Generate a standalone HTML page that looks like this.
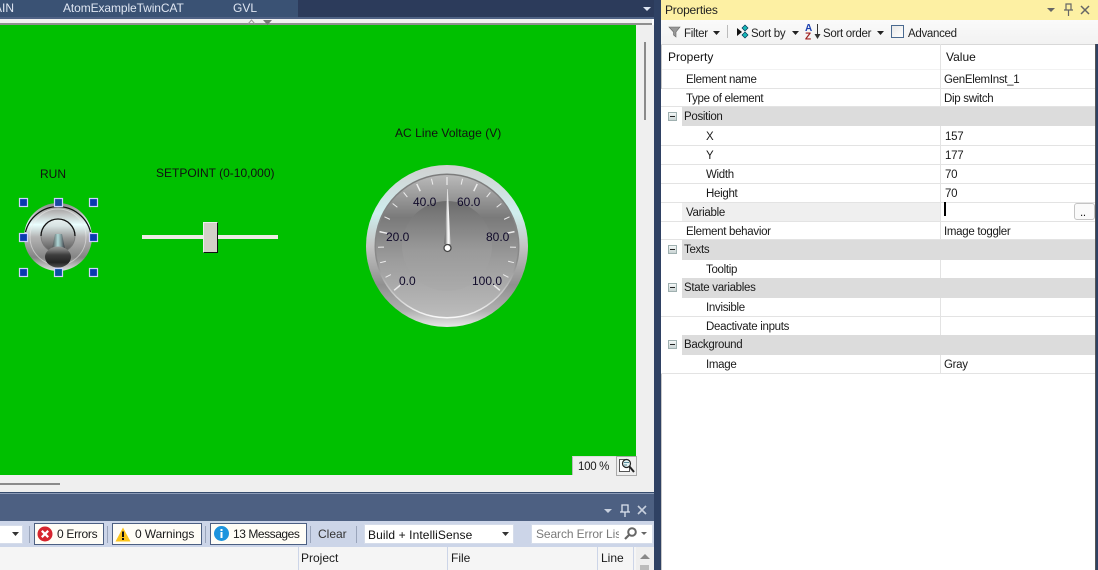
<!DOCTYPE html>
<html><head><meta charset="utf-8"><style>
html,body{margin:0;padding:0;width:1098px;height:570px;overflow:hidden;background:#fff;font-family:"Liberation Sans",sans-serif;font-size:12px;color:#1a1a1a}
.a{position:absolute}
.t{position:absolute;white-space:nowrap;line-height:14px;font-size:11.5px;letter-spacing:-.3px;margin-top:1px}
.n{font-size:12px;letter-spacing:0;margin-top:0}
.r{position:absolute;left:661px;width:434px;background:#fff;border-bottom:1px solid #e3e3e3;box-sizing:border-box}
.g{position:absolute;left:661px;width:434px;background:#dcdcdc}
.g i{position:absolute;left:0;top:0;bottom:0;width:21px;background:#fff}
.b{position:absolute;left:668px;width:9px;height:9px;box-sizing:border-box;border:1px solid #9fb0b0;background:linear-gradient(#f4f8f8,#c9d3d3)}
.b:after{content:"";position:absolute;left:1px;top:3px;width:5px;height:1px;background:#222}
.btn{position:absolute;top:523px;height:22px;box-sizing:border-box;border:1px solid #4d6082;background:#fffdf6}
.sep{position:absolute;top:526px;width:1px;height:17px;background:#9aa5bb}
</style></head><body>
<!-- top tabs -->
<div class="a" style="left:0;top:0;width:298px;height:17px;background:#3a5274"></div>
<div class="a" style="left:298px;top:0;width:356px;height:17px;background:#2c3b5b"></div>
<div class="a" style="left:0;top:17px;width:654px;height:2px;background:#4f6285"></div>
<div class="a" style="left:0;top:19px;width:652px;height:4px;background:#f0f0f0"></div>
<div class="a" style="left:0;top:23px;width:652px;height:2px;background:#8f8f8f"></div>
<div class="t n" style="left:-6px;top:1px;color:#dfe6f2">AIN</div>
<div class="t n" style="left:63px;top:1px;color:#dfe6f2;letter-spacing:-.1px">AtomExampleTwinCAT</div>
<div class="t n" style="left:233px;top:1px;color:#dfe6f2">GVL</div>
<svg class="a" style="left:640px;top:5px" width="14" height="8"><path d="M3 2h8l-4 4z" fill="#dfe6f2"/></svg>
<svg class="a" style="left:245px;top:18px" width="30" height="8"><path d="M3 6l3.500-4 3.500 4" fill="none" stroke="#999"/><path d="M18 2h9l-4.500 5z" fill="#777"/></svg>
<!-- green canvas -->
<div class="a" style="left:0;top:25px;width:636px;height:450px;background:#00c000"></div>
<div class="a" style="left:636px;top:25px;width:18px;height:467px;background:#efefef"></div>
<div class="a" style="left:644px;top:42px;width:2px;height:78px;background:#8a8a8a"></div>
<div class="a" style="left:0;top:475px;width:654px;height:17px;background:#efefef"></div>
<div class="a" style="left:0;top:483px;width:60px;height:2px;background:#8a8a8a"></div>
<div class="a" style="left:572px;top:456px;width:44px;height:19px;background:#efefef;border-left:1px solid #bbb;border-top:1px solid #ddd;box-sizing:border-box"></div>
<div class="a" style="left:616px;top:456px;width:21px;height:20px;background:#efefef;border:1px solid #aaa;box-sizing:border-box"></div>
<div class="t" style="left:578px;top:459px;letter-spacing:-.3px">100 %</div>
<svg class="a" style="left:617px;top:457px" width="19" height="18"><path d="M2.500 2.500h7l3 3v9h-10z" fill="#fff" stroke="#555"/><circle cx="9.500" cy="6.500" r="4" fill="#e6f4f4" stroke="#222" stroke-width="1.200"/><path d="M12.500 9.500l4.500 5.500" stroke="#222" stroke-width="2"/><path d="M7 5.500h5M7 8h3" stroke="#2a6a80" stroke-width=".8"/></svg>
<div class="a" style="left:654px;top:0;width:7px;height:570px;background:#2f4163"></div>
<!-- widgets -->
<div class="t n" style="left:40px;top:167px;color:#111">RUN</div>
<div class="t n" style="left:156px;top:166px;color:#111">SETPOINT (0-10,000)</div>
<div class="t n" style="left:395px;top:126px;color:#111;letter-spacing:.05px">AC Line Voltage (V)</div>
<div class="a" style="left:142px;top:235px;width:136px;height:4px;background:#eeebe6"></div>
<div class="a" style="left:203px;top:222px;width:15px;height:31px;box-sizing:border-box;background:#d4d0c8;border-right:1px solid #111;border-bottom:1px solid #111;border-top:1px solid #eee;border-left:1px solid #eee"></div>
<svg class="a" style="left:0;top:190px" width="110" height="95">
<defs>
<linearGradient id="k" x1="0" y1="0" x2="0" y2="1"><stop offset="0" stop-color="#8a8a8a"/><stop offset=".14" stop-color="#b8b8b8"/><stop offset=".32" stop-color="#eaffff"/><stop offset=".5" stop-color="#b4b4b4"/><stop offset=".8" stop-color="#848484"/><stop offset="1" stop-color="#e2e2e2"/></linearGradient>
<linearGradient id="d" x1="0" y1="0" x2="0" y2="1"><stop offset="0" stop-color="#e8f0f0"/><stop offset=".2" stop-color="#d8e4e4"/><stop offset=".55" stop-color="#989898"/><stop offset="1" stop-color="#505050"/></linearGradient>
<linearGradient id="lv" x1="0" y1="0" x2="1" y2="0"><stop offset="0" stop-color="#484848"/><stop offset=".45" stop-color="#b0d8d8"/><stop offset=".7" stop-color="#80989a"/><stop offset="1" stop-color="#34343c"/></linearGradient>
<linearGradient id="kn" x1="0" y1="0" x2="0" y2="1"><stop offset="0" stop-color="#9a9a9a"/><stop offset=".18" stop-color="#777"/><stop offset=".4" stop-color="#3e3e3e"/><stop offset=".75" stop-color="#242424"/><stop offset="1" stop-color="#505050"/></linearGradient>
</defs>
<circle cx="58" cy="47" r="34" fill="url(#k)"/>
<path d="M25.500 42A33.500 33.500 0 0 1 90.500 42" fill="none" stroke="#111" stroke-width="1.300"/>
<circle cx="58" cy="47" r="28" fill="none" stroke="#ececec" stroke-opacity=".55"/>
<circle cx="58" cy="46" r="17" fill="url(#d)" stroke="#777" stroke-width=".8"/>
<path d="M41 46A17 17 0 0 1 75 46" fill="none" stroke="#111" stroke-width="1.300"/>
<path d="M55 44h7l3 15H52z" fill="url(#lv)"/>
<ellipse cx="58" cy="67" rx="13" ry="10.500" fill="url(#kn)"/>
<g stroke="#d0d0ff" stroke-width="1.200">
<rect x="19.500" y="8.500" width="8" height="8" fill="#0a3ab0"/><rect x="54.500" y="8.500" width="8" height="8" fill="#1a4aa0"/><rect x="89.500" y="8.500" width="8" height="8" fill="#0a3ab0"/>
<rect x="19.500" y="43.500" width="8" height="8" fill="#0a3ab0"/><rect x="89.500" y="43.500" width="8" height="8" fill="#0a3ab0"/>
<rect x="19.500" y="78.500" width="8" height="8" fill="#0a3ab0"/><rect x="54.500" y="78.500" width="8" height="8" fill="#0a50a0"/><rect x="89.500" y="78.500" width="8" height="8" fill="#0a3ab0"/>
</g>
</svg>
<!-- gauge -->
<svg class="a" style="left:360px;top:160px" width="175" height="175">
<defs>
<linearGradient id="o" x1="0" y1="0" x2="0" y2="1"><stop offset="0" stop-color="#d0d0d0"/><stop offset=".3" stop-color="#cfeeee"/><stop offset=".5" stop-color="#c4c4c4"/><stop offset=".74" stop-color="#909090"/><stop offset=".9" stop-color="#b0b0b0"/><stop offset="1" stop-color="#e8e8e8"/></linearGradient>
<linearGradient id="o2" x1="0" y1="0" x2="0" y2="1"><stop offset="0" stop-color="#7c7c7c"/><stop offset=".6" stop-color="#8a8a8a"/><stop offset="1" stop-color="#fafafa"/></linearGradient>
<linearGradient id="f" x1="0" y1="0" x2="0" y2="1"><stop offset="0" stop-color="#bababa"/><stop offset=".3" stop-color="#7a7a7a"/><stop offset=".6" stop-color="#9c9c9c"/><stop offset="1" stop-color="#bcbcbc"/></linearGradient>
<linearGradient id="f2" x1="0" y1="0" x2="0" y2="1"><stop offset="0" stop-color="#6c6c6c"/><stop offset=".55" stop-color="#9a9a9a"/><stop offset="1" stop-color="#ababab"/></linearGradient>
<linearGradient id="nd" x1="0" y1="0" x2="1" y2="0"><stop offset="0" stop-color="#555"/><stop offset=".6" stop-color="#fff"/><stop offset="1" stop-color="#ccc"/></linearGradient>
</defs>
<circle cx="87" cy="86" r="81" fill="url(#o)"/>
<circle cx="87" cy="86" r="72.500" fill="url(#o2)"/>
<circle cx="87" cy="86" r="71" fill="url(#f)"/>
<circle cx="87" cy="86" r="45" fill="url(#f2)"/>
<g stroke="#ececec" stroke-width="1" transform="translate(87 86)">
<path d="M0-69V-61" stroke-width="1.500" transform="rotate(-130)"/>
<path d="M0-69V-63" transform="rotate(-117)"/>
<path d="M0-69V-63" transform="rotate(-104)"/>
<path d="M0-69V-63" transform="rotate(-91)"/>
<path d="M0-69V-61" stroke-width="1.500" transform="rotate(-78)"/>
<path d="M0-69V-63" transform="rotate(-65)"/>
<path d="M0-69V-63" transform="rotate(-52)"/>
<path d="M0-69V-63" transform="rotate(-39)"/>
<path d="M0-69V-61" stroke-width="1.500" transform="rotate(-26)"/>
<path d="M0-69V-63" transform="rotate(-13)"/>
<path d="M0-69V-61" stroke-width="1.200"/>
<path d="M0-69V-63" transform="rotate(13)"/>
<path d="M0-69V-61" stroke-width="1.500" transform="rotate(26)"/>
<path d="M0-69V-63" transform="rotate(39)"/>
<path d="M0-69V-63" transform="rotate(52)"/>
<path d="M0-69V-63" transform="rotate(65)"/>
<path d="M0-69V-61" stroke-width="1.500" transform="rotate(78)"/>
<path d="M0-69V-63" transform="rotate(91)"/>
<path d="M0-69V-63" transform="rotate(104)"/>
<path d="M0-69V-63" transform="rotate(117)"/>
<path d="M0-69V-61" stroke-width="1.500" transform="rotate(130)"/>
</g>
<g font-family="Liberation Sans,sans-serif" font-size="12" fill="#100a2a">
<text x="26" y="81">20.0</text><text x="53" y="46">40.0</text><text x="97" y="46">60.0</text><text x="126" y="81">80.0</text><text x="39" y="125">0.0</text><text x="112" y="125">100.0</text>
</g>
<path d="M87.200 29h.6l2.700 55h-6z" fill="url(#nd)"/>
<circle cx="87.500" cy="88" r="3.500" fill="#fff" stroke="#444" stroke-width="1.300"/>
</svg>
<!-- error list -->
<div class="a" style="left:0;top:492px;width:654px;height:2px;background:#364c6d"></div>
<div class="a" style="left:0;top:493px;width:654px;height:1px;background:#8d9cb8"></div>
<div class="a" style="left:0;top:494px;width:654px;height:27px;background:#4d6082"></div>
<div class="a" style="left:0;top:521px;width:654px;height:26px;background:#ccd5e8"></div>
<div class="a" style="left:0;top:547px;width:654px;height:23px;background:#f5f5f5"></div>
<svg class="a" style="left:600px;top:502px" width="52" height="16" fill="#c8d0de"><path d="M4 7h8l-4 4z"/><path d="M22 3h6v7h-6zM25 10v5M20 10h10" fill="none" stroke="#dde3ee" stroke-width="1.300"/><path d="M38 4l8 8M46 4l-8 8" stroke="#c8d0de" stroke-width="1.600"/></svg>
<div class="a" style="left:-2px;top:525px;width:25px;height:19px;background:#fff;border:1px solid #d5dcea;box-sizing:border-box"></div>
<svg class="a" style="left:12px;top:531px" width="8" height="6"><path d="M0 1h7l-3.500 4z" fill="#333"/></svg>
<div class="sep" style="left:29px"></div>
<div class="btn" style="left:34px;width:70px"></div>
<svg class="a" style="left:37px;top:526px" width="16" height="16"><circle cx="8" cy="8" r="7.500" fill="#d6252e"/><path d="M4.800 4.800l6.400 6.400M11.200 4.800l-6.400 6.400" stroke="#fff" stroke-width="2.200"/></svg>
<div class="t n" style="left:57px;top:527px;letter-spacing:-.3px">0 Errors</div>
<div class="sep" style="left:107px"></div>
<div class="btn" style="left:112px;width:90px"></div>
<svg class="a" style="left:115px;top:527px" width="16" height="15"><path d="M8 .500l7.500 14H.500z" fill="#fcc419"/><path d="M8 4.500v5.500M8 11v2" stroke="#111" stroke-width="2"/></svg>
<div class="t n" style="left:135px;top:527px;letter-spacing:-.1px">0 Warnings</div>
<div class="sep" style="left:205px"></div>
<div class="btn" style="left:210px;width:97px"></div>
<svg class="a" style="left:214px;top:526px" width="15" height="15"><circle cx="7.500" cy="7.500" r="7.500" fill="#1d94de"/><path d="M7.500 6v6M7.500 3v2" stroke="#fff" stroke-width="2"/></svg>
<div class="t n" style="left:233px;top:527px;letter-spacing:-.45px">13 Messages</div>
<div class="sep" style="left:310px"></div>
<div class="t n" style="left:318px;top:527px;color:#333">Clear</div>
<div class="sep" style="left:356px"></div>
<div class="a" style="left:364px;top:524px;width:150px;height:20px;background:#fff;border:1px solid #d5dcea;box-sizing:border-box"></div>
<div class="t n" style="left:368px;top:528px;color:#111;letter-spacing:.1px">Build + IntelliSense</div>
<svg class="a" style="left:502px;top:531px" width="8" height="6"><path d="M0 1h7l-3.500 4z" fill="#333"/></svg>
<div class="a" style="left:531px;top:524px;width:122px;height:20px;background:#fff;border:1px solid #d5dcea;box-sizing:border-box"></div>
<div class="t n" style="left:536px;top:527px;width:83px;overflow:hidden;color:#7a7a7a;letter-spacing:-.1px">Search Error List</div>
<svg class="a" style="left:624px;top:526px" width="26" height="15"><circle cx="8" cy="6" r="3.800" fill="none" stroke="#666" stroke-width="2"/><path d="M5 9l-4 4" stroke="#666" stroke-width="2.200"/><path d="M17 6h6l-3 3z" fill="#666"/></svg>
<div class="a" style="left:298px;top:547px;width:1px;height:23px;background:#ccd5e8"></div>
<div class="a" style="left:447px;top:547px;width:1px;height:23px;background:#ccd5e8"></div>
<div class="a" style="left:597px;top:547px;width:1px;height:23px;background:#ccd5e8"></div>
<div class="a" style="left:633px;top:547px;width:1px;height:23px;background:#ccd5e8"></div>
<div class="t n" style="left:301px;top:551px">Project</div>
<div class="t n" style="left:451px;top:551px">File</div>
<div class="t n" style="left:601px;top:551px">Line</div>
<div class="a" style="left:636px;top:547px;width:18px;height:23px;background:#eeeeee"></div>
<svg class="a" style="left:638px;top:552px" width="14" height="8"><path d="M2 7l5-5 5 5z" fill="#888"/></svg>
<div class="a" style="left:640px;top:565px;width:9px;height:5px;background:#bbb"></div>
<!-- properties -->
<div class="a" style="left:661px;top:0;width:437px;height:20px;background:#fdf0a3"></div>
<div class="t n" style="left:665px;top:3px;color:#222;letter-spacing:-.2px">Properties</div>
<svg class="a" style="left:1045px;top:2px" width="50" height="16"><path d="M2 6h8l-4 4z" fill="#666"/><path d="M21 2h5v6h-5zM23.500 8v6M19 8h9" fill="none" stroke="#666" stroke-width="1.200"/><path d="M36 4l8 8M44 4l-8 8" stroke="#666" stroke-width="1.500"/></svg>
<div class="a" style="left:661px;top:20px;width:437px;height:24px;background:linear-gradient(#fafafa,#f2f2f2)"></div>
<svg class="a" style="left:668px;top:25px" width="14" height="14"><path d="M1 2h11L8 7v5L5.500 10V7z" fill="#999" stroke="#666" stroke-width=".6"/></svg>
<div class="t" style="left:684px;top:26px;color:#222">Filter</div>
<svg class="a" style="left:713px;top:30px" width="8" height="6"><path d="M0 1h7l-3.500 4z" fill="#222"/></svg>
<div class="a" style="left:727px;top:25px;width:1px;height:13px;background:#bbb"></div>
<svg class="a" style="left:736px;top:24px" width="14" height="15"><path d="M1 4l5 4-5 4z" fill="#111"/><path d="M9 1l3 3-3 3-3-3zM9 8l3 3-3 3-3-3z" fill="#18b8b8" stroke="#035" stroke-width=".7"/></svg>
<div class="t" style="left:751px;top:26px;color:#222">Sort by</div>
<svg class="a" style="left:792px;top:30px" width="8" height="6"><path d="M0 1h7l-3.500 4z" fill="#222"/></svg>
<svg class="a" style="left:805px;top:23px" width="17" height="17"><text x="0" y="8" font-size="10" font-weight="bold" font-family="Liberation Sans,sans-serif" fill="#1a3fb0">A</text><text x="0" y="16.500" font-size="10" font-weight="bold" font-family="Liberation Sans,sans-serif" fill="#a02020">Z</text><path d="M12.500 1v11" stroke="#333"/><path d="M9.500 11h6l-3 5z" fill="#333"/></svg>
<div class="t" style="left:823px;top:26px;color:#222">Sort order</div>
<svg class="a" style="left:877px;top:30px" width="8" height="6"><path d="M0 1h7l-3.500 4z" fill="#222"/></svg>
<div class="a" style="left:891px;top:25px;width:13px;height:13px;border:1px solid #4a6a90;background:linear-gradient(135deg,#e8e8e8,#fff);box-sizing:border-box"></div>
<div class="t" style="left:908px;top:26px;color:#222">Advanced</div>
<!-- grid -->
<div class="a" style="left:661px;top:44px;width:1px;height:526px;background:#c8c8c8"></div>
<div class="a" style="left:661px;top:44px;width:437px;height:1px;background:#d8d8d8"></div>
<div class="a" style="left:1095px;top:44px;width:1px;height:526px;background:#555"></div>
<div class="a" style="left:1096px;top:44px;width:2px;height:526px;background:#2f4163"></div>
<div class="a" style="left:662px;top:88px;width:433px;height:1px;background:#e3e3e3"></div>
<div class="a" style="left:662px;top:69px;width:433px;height:1px;background:#f2f2f2"></div>
<div class="r" style="top:89px;height:18px"></div>
<div class="g" style="top:107px;height:19px"><i></i></div>
<div class="r" style="top:126px;height:20px"></div>
<div class="r" style="top:146px;height:19px"></div>
<div class="r" style="top:165px;height:19px"></div>
<div class="r" style="top:184px;height:19px"></div>
<div class="r" style="top:203px;height:19px"></div>
<div class="a" style="left:682px;top:203px;width:258px;height:18px;background:#efefef"></div>
<div class="r" style="top:222px;height:18px"></div>
<div class="g" style="top:240px;height:20px"><i></i></div>
<div class="r" style="top:260px;height:18px;border-bottom:0"></div>
<div class="g" style="top:278px;height:20px"><i></i></div>
<div class="r" style="top:298px;height:19px"></div>
<div class="r" style="top:317px;height:18px;border-bottom:0"></div>
<div class="g" style="top:335px;height:20px"><i></i></div>
<div class="r" style="top:355px;height:19px"></div>
<div class="a" style="left:940px;top:44px;width:1px;height:63px;background:#e3e3e3"></div>
<div class="a" style="left:940px;top:126px;width:1px;height:114px;background:#e3e3e3"></div>
<div class="a" style="left:940px;top:260px;width:1px;height:18px;background:#e3e3e3"></div>
<div class="a" style="left:940px;top:298px;width:1px;height:37px;background:#e3e3e3"></div>
<div class="a" style="left:940px;top:355px;width:1px;height:19px;background:#e3e3e3"></div>
<div class="b" style="top:112px"></div><div class="b" style="top:245px"></div><div class="b" style="top:283px"></div><div class="b" style="top:340px"></div>
<div class="t n" style="left:668px;top:50px;color:#111">Property</div>
<div class="t n" style="left:946px;top:50px;color:#111">Value</div>
<div class="t" style="left:686px;top:72px">Element name</div><div class="t" style="left:944px;top:72px">GenElemInst_1</div>
<div class="t" style="left:686px;top:91px">Type of element</div><div class="t" style="left:944px;top:91px">Dip switch</div>
<div class="t" style="left:684px;top:109px">Position</div>
<div class="t" style="left:706px;top:129px">X</div><div class="t" style="left:945px;top:129px">157</div>
<div class="t" style="left:706px;top:148px">Y</div><div class="t" style="left:945px;top:148px">177</div>
<div class="t" style="left:706px;top:167px">Width</div><div class="t" style="left:945px;top:167px">70</div>
<div class="t" style="left:706px;top:186px">Height</div><div class="t" style="left:945px;top:186px">70</div>
<div class="t" style="left:686px;top:205px">Variable</div>
<div class="a" style="left:944px;top:202px;width:2px;height:14px;background:#000"></div>
<div class="a" style="left:1074px;top:203px;width:21px;height:17px;box-sizing:border-box;border:1px solid #c4c4c4;border-radius:3px;background:#fafafa"></div>
<div class="t" style="left:1080px;top:205px">..</div>
<div class="t" style="left:686px;top:224px">Element behavior</div><div class="t" style="left:944px;top:224px">Image toggler</div>
<div class="t" style="left:684px;top:242px">Texts</div>
<div class="t" style="left:706px;top:262px">Tooltip</div>
<div class="t" style="left:684px;top:280px">State variables</div>
<div class="t" style="left:706px;top:300px">Invisible</div>
<div class="t" style="left:706px;top:319px">Deactivate inputs</div>
<div class="t" style="left:684px;top:337px">Background</div>
<div class="t" style="left:706px;top:357px">Image</div><div class="t" style="left:944px;top:357px">Gray</div>
</body></html>
